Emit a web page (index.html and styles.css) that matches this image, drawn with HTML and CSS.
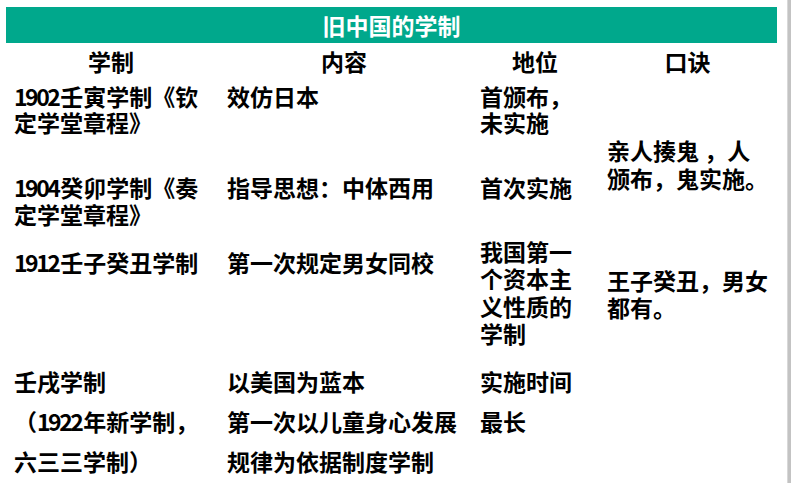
FILE: index.html
```html
<!DOCTYPE html>
<html lang="zh-CN">
<head>
<meta charset="utf-8">
<title>旧中国的学制</title>
<link rel="stylesheet" href="styles.css">
</head>
<body>
<div class="page">
  <div class="slide">
    <div class="title">旧中国的学制</div>
    <div class="table">
      <div class="th">学制</div>
      <div class="th">内容</div>
      <div class="th">地位</div>
      <div class="th">口诀</div>

      <div class="td c1 r1"><span class="num">1902</span>壬寅学制《钦<br>定学堂章程》</div>
      <div class="td c2 r1">效仿日本</div>
      <div class="td c3 r1">首颁布，<br>未实施</div>
      <div class="td c4 k1">亲人揍鬼 ，人<br>颁布，鬼实施。</div>

      <div class="td c1 r2"><span class="num">1904</span>癸卯学制《奏<br>定学堂章程》</div>
      <div class="td c2 r2">指导思想：中体西用</div>
      <div class="td c3 r2">首次实施</div>

      <div class="td c1 r3"><span class="num">1912</span>壬子癸丑学制</div>
      <div class="td c2 r3">第一次规定男女同校</div>
      <div class="td c3 r3 tight">我国第一<br>个资本主<br>义性质的<br>学制</div>
      <div class="td c4 k2">王子癸丑，男女<br>都有。</div>

      <div class="td c1 r4">壬戌学制<br>（<span class="num">1922</span>年新学制，<br>六三三学制）</div>
      <div class="td c2 r4">以美国为蓝本<br>第一次以儿童身心发展<br>规律为依据制度学制</div>
      <div class="td c3 r4">实施时间<br>最长</div>
      <div class="td c4 r4"></div>
    </div>
  </div>
  <div class="edge"></div>
</div>
</body>
</html>
```

FILE: styles.css
```css
html, body {
  margin: 0;
  padding: 0;
  background: #ffffff;
}

body {
  font-family: "Noto Sans CJK SC", "Noto Sans", sans-serif;
  color: #000000;
  font-weight: 700;
  font-size: 23px;
}

.page {
  display: flex;
  height: 483px;
  overflow: hidden;
}

.slide {
  flex: 1;
  padding: 7px 0 0 6px;
}

.edge {
  width: 3px;
  background: #c3c3c3;
  border-left: 1px solid #d8d8d8;
}

.title {
  width: 771px;
  height: 36px;
  line-height: 36px;
  background: #00a88c;
  color: #ffffff;
  text-align: center;
}

.table {
  display: grid;
  width: 771px;
  grid-template-columns: 210px 256px 126px 179px;
  grid-template-rows: 37px 85px 70px 125px 123px;
}

.th {
  line-height: 37px;
  text-align: center;
}

.td {
  line-height: 27px;
  white-space: nowrap;
}

.num {
  letter-spacing: -2.5px;
  margin-right: 2px;
}

.c1 { grid-column: 1; padding-left: 8px; }
.c2 { grid-column: 2; padding-left: 11px; }
.c3 { grid-column: 3; padding-left: 8px; }
.c4 { grid-column: 4; padding-left: 9px; }

.r1 { grid-row: 2; padding-top: 3px; line-height: 26px; }
.r2 { grid-row: 3; padding-top: 9px; }
.r3 { grid-row: 4; padding-top: 14px; }
.r4 { grid-row: 5; padding-top: 1px; line-height: 40px; }

.r3.tight { padding-top: 3px; line-height: 27.3px; }

.k1 { grid-row: 2 / span 2; padding-top: 57px; line-height: 27.5px; }
.k2 { grid-row: 4; padding-top: 32px; line-height: 26.5px; }
```
